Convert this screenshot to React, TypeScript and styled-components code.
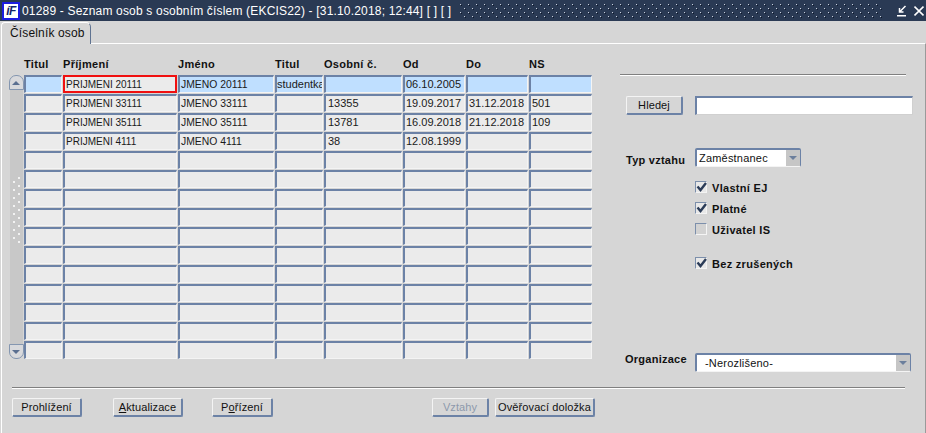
import styled, { createGlobalStyle } from "styled-components";

const GlobalStyle = createGlobalStyle`
  html, body {
    margin: 0;
    background: #d6d6d6;
    overflow: hidden;
  }
  * {
    box-sizing: border-box;
  }
`;

const columns = [
  { title: "Titul", width: 38, inset: 1, size: 11 },
  { title: "Příjmení", width: 114, inset: 1, size: 10 },
  { title: "Jméno", width: 96, inset: 1, size: 10.4 },
  { title: "Titul", width: 48, inset: 0, size: 11 },
  { title: "Osobní č.", width: 78, inset: 2, size: 11 },
  { title: "Od", width: 62, inset: 1, size: 11 },
  { title: "Do", width: 62, inset: 1, size: 11 },
  { title: "NS", width: 63, inset: 1, size: 11 },
];

const rows = [
  ["", "PRIJMENI 20111", "JMENO 20111", "studentka", "", "06.10.2005", "", ""],
  ["", "PRIJMENI 33111", "JMENO 33111", "", "13355", "19.09.2017", "31.12.2018", "501"],
  ["", "PRIJMENI 35111", "JMENO 35111", "", "13781", "16.09.2018", "21.12.2018", "109"],
  ["", "PRIJMENI 4111", "JMENO 4111", "", "38", "12.08.1999", "", ""],
  ...Array.from({ length: 11 }, () => ["", "", "", "", "", "", "", ""]),
];

const gridTemplate = columns.map((c) => `${c.width}px`).join(" ");

const App = () => {
  return (
    <Window>
      <GlobalStyle />
      <TitleBar>
        <Logo>
          <span>íF</span>
        </Logo>
        <TitleText>01289 - Seznam osob s osobním číslem (EKCIS22) - [31.10.2018; 12:44] [ ] [ ]</TitleText>
        <TitleDots aria-hidden>
          <defs>
            <pattern id="dots" width="8" height="8" patternUnits="userSpaceOnUse">
              <rect x="2" y="1" width="1" height="1" fill="#c9d0dc" />
              <rect x="3" y="2" width="1" height="1" fill="#101a2c" />
              <rect x="6" y="5" width="1" height="1" fill="#c9d0dc" />
              <rect x="7" y="6" width="1" height="1" fill="#101a2c" />
            </pattern>
          </defs>
          <rect width="100%" height="100%" fill="url(#dots)" />
        </TitleDots>
        <WindowIcon viewBox="0 0 10 12">
          <path d="M8.5 1 3 6.5M2.5 3v4h4" fill="none" stroke="#fff" strokeWidth="1.5" />
          <rect x="0" y="10" width="9" height="1.5" fill="#fff" />
        </WindowIcon>
        <WindowIcon viewBox="0 0 10 12">
          <path d="M0.5 1.5 9.5 10.5M9.5 1.5 0.5 10.5" fill="none" stroke="#fff" strokeWidth="1.6" />
        </WindowIcon>
      </TitleBar>

      <TabStrip>
        <Tab>Číselník osob</Tab>
      </TabStrip>

      <Panel>
        <Content>
          <TableArea>
            <HeaderRow>
              {columns.map((c, i) => (
                <HeaderCell key={i}>{c.title}</HeaderCell>
              ))}
            </HeaderRow>
            <TableBody>
              <Scrollbar>
                <ScrollButton $up>
                  <ScrollArrow $up />
                </ScrollButton>
                <ScrollTrack>
                  <ScrollGrip aria-hidden>
                    <defs>
                      <pattern id="grip" width="8" height="8" patternUnits="userSpaceOnUse">
                        <rect x="0" y="4" width="2" height="2" fill="#f2f2f2" />
                        <rect x="5" y="0" width="2" height="2" fill="#f2f2f2" />
                      </pattern>
                    </defs>
                    <rect width="100%" height="100%" fill="url(#grip)" />
                  </ScrollGrip>
                </ScrollTrack>
                <ScrollButton>
                  <ScrollArrow />
                </ScrollButton>
              </Scrollbar>
              <Grid>
                {rows.map((row, r) =>
                  row.map((value, c) => (
                    <Cell
                      key={`${r}-${c}`}
                      $current={r === 0}
                      $focused={r === 0 && c === 1}
                      $inset={columns[c].inset}
                      $size={columns[c].size}
                    >
                      {value}
                    </Cell>
                  )),
                )}
              </Grid>
            </TableBody>
          </TableArea>

          <SidePanel>
            <Separator />
            <SearchRow>
              <Button $width={57}>Hledej</Button>
              <SearchInput />
            </SearchRow>
            <TypeRow>
              <TypeLabel>Typ vztahu</TypeLabel>
              <Select $width={106} $inset={2}>
                Zaměstnanec
                <SelectArrow />
              </Select>
            </TypeRow>
            <CheckList>
              <CheckRow>
                <CheckBox $checked>
                  <CheckMark />
                </CheckBox>
                Vlastní EJ
              </CheckRow>
              <CheckRow>
                <CheckBox $checked>
                  <CheckMark />
                </CheckBox>
                Platné
              </CheckRow>
              <CheckRow>
                <CheckBox />
                Uživatel IS
              </CheckRow>
              <CheckRow $extra>
                <CheckBox $checked>
                  <CheckMark />
                </CheckBox>
                Bez zrušených
              </CheckRow>
            </CheckList>
            <OrgRow>
              <OrgLabel>Organizace</OrgLabel>
              <Select $width={216} $inset={8}>
                -Nerozlišeno-
                <SelectArrow />
              </Select>
            </OrgRow>
          </SidePanel>
        </Content>

        <Footer>
          <FooterLine />
          <ButtonRow>
            <Button $width={70}>Prohlížení</Button>
            <Button $width={70} $gap={31}>
              <u>A</u>ktualizace
            </Button>
            <Button $width={61} $gap={29}>
              P<u>o</u>řízení
            </Button>
            <Button $width={57} $gap={159} $disabled>
              Vztahy
            </Button>
            <Button $width={100} $gap={6}>
              Ověřovací doložka
            </Button>
          </ButtonRow>
        </Footer>
      </Panel>
    </Window>
  );
};

export default App;

const CheckMark = () => (
  <CheckSvg viewBox="0 0 11 10">
    <path d="M1.5 4.5 4.5 8 10 1" fill="none" stroke="#2b3c58" strokeWidth="2.4" />
  </CheckSvg>
);

const CheckSvg = styled.svg`
  width: 11px;
  height: 10px;
  flex: none;
`;

const Window = styled.div`
  width: 926px;
  height: 433px;
  display: flex;
  flex-direction: column;
  background: #d6d6d6;
  font-family: "Liberation Sans", Arial, sans-serif;
  font-size: 11px;
  color: #111;
`;

const TitleBar = styled.div`
  height: 21px;
  flex: none;
  display: flex;
  align-items: center;
  padding: 0 2px 0 2px;
  background: #2a3a54;
  color: #fff;
`;

const Logo = styled.div`
  width: 18px;
  height: 18px;
  flex: none;
  display: flex;
  align-items: center;
  justify-content: center;
  background: #fff;
  border: 2px solid #1c1ce0;
  font: italic bold 12px "Liberation Sans", Arial, sans-serif;
  color: #14246a;
  letter-spacing: -0.5px;
`;

const TitleText = styled.div`
  margin-left: 2px;
  font-size: 12px;
  letter-spacing: 0.18px;
  white-space: nowrap;
  flex: none;
`;

const TitleDots = styled.svg`
  flex: 1;
  height: 16px;
  margin: 0 6px 0 7px;
  min-width: 0;
`;

const WindowIcon = styled.svg`
  width: 10px;
  height: 12px;
  flex: none;
  margin-left: 7px;
  &:first-of-type {
    margin-left: 0;
  }
`;

const TabStrip = styled.div`
  height: 22px;
  flex: none;
  display: flex;
  align-items: flex-end;
  padding: 1px 0 0 1px;
`;

const Tab = styled.div`
  width: 90px;
  height: 22px;
  margin-bottom: -1px;
  padding: 3px 0 0 8px;
  font-size: 12px;
  letter-spacing: 0.15px;
  background: #d6d6d6;
  border-top: 1px solid #fff;
  border-left: 1px solid #fff;
  border-right: 1px solid #5f7391;
  border-radius: 4px 5px 0 0;
  position: relative;
  z-index: 1;
`;

const Panel = styled.div`
  flex: 1;
  min-height: 0;
  display: flex;
  flex-direction: column;
  margin-left: 1px;
  border-top: 1px solid #fff;
  border-left: 1px solid #fff;
  border-right: 1px solid #9a9a9a;
  padding-left: 6px;
`;

const Content = styled.div`
  height: 331px;
  flex: none;
  display: flex;
`;

const TableArea = styled.div`
  width: 612px;
  flex: none;
  display: flex;
  flex-direction: column;
`;

const HeaderRow = styled.div`
  height: 31px;
  flex: none;
  display: grid;
  grid-template-columns: ${gridTemplate};
  gap: 1px;
  align-items: end;
  padding: 0 0 4px 16px;
`;

const HeaderCell = styled.div`
  font-weight: bold;
  letter-spacing: 0.3px;
  line-height: 14px;
`;

const TableBody = styled.div`
  display: flex;
`;

const Scrollbar = styled.div`
  width: 16px;
  height: 284px;
  flex: none;
  display: flex;
  flex-direction: column;
  align-items: center;
`;

const ScrollButton = styled.div<{ $up?: boolean }>`
  width: 15px;
  height: 15px;
  flex: none;
  display: flex;
  align-items: center;
  justify-content: center;
  background: #d8d9dc;
  border: 1px solid #8496b0;
  border-radius: ${({ $up }) => ($up ? "7px 7px 0 0" : "0 0 7px 7px")};
`;

const ScrollArrow = styled.div<{ $up?: boolean }>`
  width: 0;
  height: 0;
  border-left: 4px solid transparent;
  border-right: 4px solid transparent;
  ${({ $up }) => ($up ? "border-bottom: 4px solid #5a6f90;" : "border-top: 4px solid #5a6f90;")}
`;

const ScrollTrack = styled.div`
  flex: 1;
  width: 13px;
  background: #c8c8c8;
  padding: 87px 0 0 3px;
`;

const ScrollGrip = styled.svg`
  display: block;
  width: 8px;
  height: 66px;
`;

const Grid = styled.div`
  display: grid;
  grid-template-columns: ${gridTemplate};
  grid-auto-rows: 18px;
  gap: 1px;
`;

const Cell = styled.div<{ $current?: boolean; $focused?: boolean; $inset: number; $size: number }>`
  padding-left: ${({ $inset }) => $inset}px;
  line-height: 15px;
  font-size: ${({ $size }) => $size}px;
  white-space: nowrap;
  overflow: hidden;
  color: #1a1a1a;
  background: ${({ $current }) => ($current ? "#bfdfff" : "#ebebeb")};
  border-style: solid;
  border-width: 2px 1px 1px 2px;
  border-color: #6c82a6 #f4f4f4 #f4f4f4 #6c82a6;
  ${({ $focused }) =>
    $focused &&
    `
    background: #ebebeb;
    border: 2px solid #f01010;
  `}
`;

const SidePanel = styled.div`
  width: 300px;
  flex: none;
  display: flex;
  flex-direction: column;
  padding-top: 30px;
`;

const Separator = styled.div`
  width: 286px;
  height: 2px;
  flex: none;
  background: linear-gradient(#808080 50%, #fff 50%);
`;

const SearchRow = styled.div`
  margin: 20px 0 0 6px;
  display: flex;
  align-items: flex-start;
  gap: 12px;
`;

const Button = styled.button<{ $width: number; $gap?: number; $disabled?: boolean }>`
  width: ${({ $width }) => $width}px;
  height: 19px;
  flex: none;
  padding: 0;
  margin-left: ${({ $gap }) => $gap ?? 0}px;
  font: 11px "Liberation Sans", Arial, sans-serif;
  letter-spacing: 0.1px;
  color: ${({ $disabled }) => ($disabled ? "#8d99ac" : "#111")};
  background: #d6d6d6;
  border-style: solid;
  border-width: 1px 2px 2px 1px;
  border-color: #f4f4f4 #6c82a6 #6c82a6 #f4f4f4;
  border-radius: 2px;
  white-space: nowrap;
`;

const SearchInput = styled.div`
  width: 218px;
  height: 19px;
  background: #fff;
  border-style: solid;
  border-width: 2px 1px 1px 2px;
  border-color: #6c82a6 #d0d0d0 #d0d0d0 #6c82a6;
`;

const TypeRow = styled.div`
  margin: 33px 0 0 6px;
  display: flex;
  align-items: center;
  gap: 9px;
`;

const FieldLabel = styled.div`
  flex: none;
  font-weight: bold;
  letter-spacing: 0.25px;
  white-space: nowrap;
`;

const TypeLabel = styled(FieldLabel)`
  width: 60px;
  padding-top: 5px;
`;

const Select = styled.div<{ $width: number; $inset: number }>`
  width: ${({ $width }) => $width}px;
  height: 19px;
  flex: none;
  display: flex;
  align-items: center;
  justify-content: space-between;
  padding-left: ${({ $inset }) => $inset}px;
  letter-spacing: 0.2px;
  background: #fff;
  border-style: solid;
  border-width: 2px 1px 1px 2px;
  border-color: #6c82a6 #6c82a6 #f4f4f4 #6c82a6;
  border-radius: 2px;
`;

const SelectArrow = styled.div`
  width: 14px;
  height: 100%;
  flex: none;
  background: #c6c6c6;
  position: relative;
  &::after {
    content: "";
    position: absolute;
    left: 3px;
    top: 6px;
    border-left: 4px solid transparent;
    border-right: 4px solid transparent;
    border-top: 4px solid #6c7f9c;
  }
`;

const CheckList = styled.div`
  margin: 10px 0 0 75px;
  display: flex;
  flex-direction: column;
`;

const CheckRow = styled.div<{ $extra?: boolean }>`
  height: 21px;
  margin-top: ${({ $extra }) => ($extra ? "13px" : "0")};
  display: flex;
  align-items: center;
  gap: 5px;
  font-weight: bold;
  letter-spacing: 0.3px;
`;

const CheckBox = styled.div<{ $checked?: boolean }>`
  width: 12px;
  height: 12px;
  margin-top: -2px;
  flex: none;
  display: flex;
  align-items: center;
  justify-content: center;
  background: ${({ $checked }) => ($checked ? "#e8e8e8" : "#d2d2d2")};
  border-style: solid;
  border-width: 1px;
  border-color: #7c8fab #f4f4f4 #f4f4f4 #7c8fab;
`;

const OrgRow = styled.div`
  margin: auto 0 0 5px;
  padding-bottom: 3px;
  display: flex;
  align-items: flex-start;
`;

const OrgLabel = styled(FieldLabel)`
  width: 70px;
  line-height: 14px;
  margin-top: -1px;
`;

const Footer = styled.div`
  padding: 12px 0 0 4px;
`;

const FooterLine = styled.div`
  width: 893px;
  height: 2px;
  background: linear-gradient(#808080 50%, #fff 50%);
`;

const ButtonRow = styled.div`
  margin-top: 9px;
  display: flex;
`;
